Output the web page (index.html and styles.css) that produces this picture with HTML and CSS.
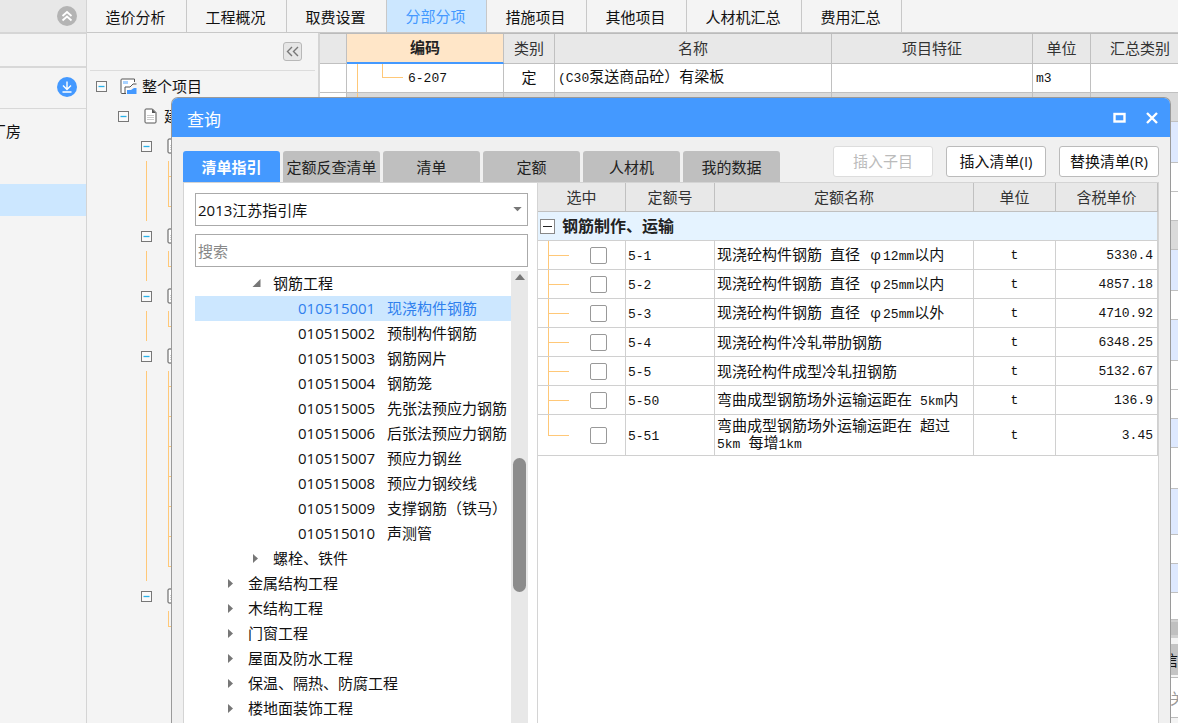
FILE: index.html
```html
<!DOCTYPE html>
<html lang="zh-CN">
<head>
<meta charset="utf-8">
<title>分部分项 - 查询</title>
<link rel="stylesheet" href="styles.css">
</head>
<body>
<svg class="defs" aria-hidden="true">
  <symbol id="minus" viewBox="0 0 11 11"><rect x=".5" y=".5" width="10" height="10" fill="#fafafa" stroke="#777"/><path d="M2.5 5.5h6" stroke="#29b1e8" stroke-width="1.300"/></symbol>
  <symbol id="doc" viewBox="0 0 13 16"><path d="M2 1h6.500l3.500 3.500V14a1 1 0 0 1-1 1H2a1 1 0 0 1-1-1V2a1 1 0 0 1 1-1z" fill="#fff" stroke="#555"/><path d="M8 1v4h4z" fill="#555"/><path d="M3 7.500h7M3 9.500h7M3 11.500h7" stroke="#ccc"/></symbol>
</svg>
<div class="app">
  <aside class="side">
    <div class="side-head">
      <svg class="round" viewBox="0 0 20 20"><circle cx="10" cy="10" r="10" fill="#b4b4b4"/><path d="M5.500 10L10 6l4.500 4M5.500 14.500L10 10.500l4.500 4" fill="none" stroke="#fff" stroke-width="1.800"/></svg>
    </div>
    <div class="side-gap"></div>
    <div class="side-load">
      <svg class="round" viewBox="0 0 20 20"><circle cx="10" cy="10" r="10" fill="#4499ff"/><path d="M10 4.500v8M6 8.500l4 4 4-4M5.500 15h9" fill="none" stroke="#fff" stroke-width="1.400"/></svg>
    </div>
    <div class="side-item">厂房</div>
    <div class="side-item side-selected"></div>
  </aside>

  <main class="main">
    <nav class="tabs">
      <button>造价分析</button><button>工程概况</button><button>取费设置</button><button class="on">分部分项</button><button>措施项目</button><button>其他项目</button><button class="wide">人材机汇总</button><button>费用汇总</button>
    </nav>
    <div class="work">
      <section class="project">
        <div class="project-bar">
          <button class="fold" aria-label="收起"><svg viewBox="0 0 17 17"><path d="M8 4L3.500 8.500 8 13M14 4L9.500 8.500 14 13" fill="none" stroke="#777" stroke-width="1.400"/></svg></button>
        </div>
        <ul class="tree">
          <li class="node l1"><svg class="pm"><use href="#minus"/></svg>
            <svg class="proj" viewBox="0 0 17 17"><path d="M6 15.500H2a1 1 0 0 1-1-1V2a1 1 0 0 1 1-1h12.500v3" fill="#fff" stroke="#555"/><path d="M3 3h5v3H3z" fill="#a8d2ff"/><path d="M5 16V9h5l3-3h3.500" fill="none" stroke="#555"/><path d="M7 16v-4h4l3-2h2.500v6z" fill="#4499ff"/></svg>
            整个项目</li>
          <li class="node l2"><svg class="pm"><use href="#minus"/></svg><svg class="doc"><use href="#doc"/></svg>建筑工程</li>
          <li class="node l3"><svg class="pm"><use href="#minus"/></svg><svg class="doc"><use href="#doc"/></svg></li>
          <li class="leaf"></li><li class="leaf end"></li>
          <li class="node l3"><svg class="pm"><use href="#minus"/></svg><svg class="doc"><use href="#doc"/></svg></li>
          <li class="leaf end"></li>
          <li class="node l3"><svg class="pm"><use href="#minus"/></svg><svg class="doc"><use href="#doc"/></svg></li>
          <li class="leaf end"></li>
          <li class="node l3"><svg class="pm"><use href="#minus"/></svg><svg class="doc"><use href="#doc"/></svg></li>
          <li class="leaf"></li><li class="leaf"></li><li class="leaf"></li><li class="leaf"></li><li class="leaf"></li><li class="leaf"></li><li class="leaf end"></li>
          <li class="node l3"><svg class="pm"><use href="#minus"/></svg><svg class="doc"><use href="#doc"/></svg></li>
          <li class="leaf end last"></li>
        </ul>
      </section>

      <section class="sheet">
        <table class="bill">
          <colgroup><col class="b0"><col class="b1"><col class="b2"><col class="b3"><col class="b4"><col class="b5"><col class="b6"></colgroup>
          <thead><tr><th></th><th class="active">编码</th><th>类别</th><th>名称</th><th>项目特征</th><th>单位</th><th>汇总类别</th></tr></thead>
          <tbody>
            <tr><td></td><td class="code"><span class="lat">6-207</span></td><td class="mid">定</td><td><span class="lat">(C30</span>泵送商品砼）有梁板</td><td></td><td><span class="lat">m3</span></td><td></td></tr>
            <tr class="grey"><td></td><td class="stem"></td><td></td><td></td><td></td><td></td><td></td></tr>
            <tr class="blue tall"><td colspan="7"></td></tr>
            <tr><td colspan="7"></td></tr>
            <tr><td colspan="7"></td></tr>
            <tr class="grey"><td colspan="7"></td></tr>
            <tr class="blue tall"><td colspan="7"></td></tr>
            <tr><td colspan="7"></td></tr>
            <tr class="blue tall"><td colspan="7"></td></tr>
            <tr><td colspan="7"></td></tr>
            <tr><td colspan="7"></td></tr>
            <tr class="blue"><td colspan="7"></td></tr>
            <tr class="tall"><td colspan="7"></td></tr>
            <tr class="blue taller"><td colspan="7"></td></tr>
            <tr><td colspan="7"></td></tr>
            <tr class="blue"><td colspan="7"></td></tr>
            <tr class="plain"><td colspan="7"></td></tr>
          </tbody>
        </table>
        <div class="hscroll"></div>
        <div class="lower-tabs"><span>信息</span></div>
        <div class="lower-row">关联</div>
        <div class="lower-end"></div>
      </section>
    </div>
  </main>
</div>

<div class="dialog" role="dialog" aria-labelledby="dlg-title">
  <header class="title">
    <h1 id="dlg-title">查询</h1>
    <button aria-label="最大化"><svg viewBox="0 0 14 12"><rect x="1.500" y="2" width="10" height="7.500" fill="none" stroke="#fff" stroke-width="2.400"/></svg></button>
    <button aria-label="关闭"><svg viewBox="0 0 14 12"><path d="M2 1l10 10M12 1L2 11" stroke="#fff" stroke-width="2.400"/></svg></button>
  </header>
  <div class="tools">
    <div class="dtabs">
      <button class="on">清单指引</button><button>定额反查清单</button><button>清单</button><button>定额</button><button>人材机</button><button>我的数据</button>
    </div>
    <div class="actions">
      <button disabled>插入子目</button><button>插入清单(I)</button><button>替换清单(R)</button>
    </div>
  </div>
  <div class="panes">
    <section class="guide">
      <div class="pick">
        <select aria-label="指引库"><option>2013江苏指引库</option></select>
        <svg viewBox="0 0 10 6"><path d="M0 0h10L5 5z" fill="#777"/></svg>
      </div>
      <input class="search" type="text" placeholder="搜索" aria-label="搜索">
      <div class="scroller">
        <ul class="items">
          <li class="g2"><svg class="tri" viewBox="0 0 9 9"><path d="M8.500 0v8H.5z" fill="#777"/></svg>钢筋工程</li>
          <li class="item chosen"><span>010515001</span>现浇构件钢筋</li>
          <li class="item"><span>010515002</span>预制构件钢筋</li>
          <li class="item"><span>010515003</span>钢筋网片</li>
          <li class="item"><span>010515004</span>钢筋笼</li>
          <li class="item"><span>010515005</span>先张法预应力钢筋</li>
          <li class="item"><span>010515006</span>后张法预应力钢筋</li>
          <li class="item"><span>010515007</span>预应力钢丝</li>
          <li class="item"><span>010515008</span>预应力钢绞线</li>
          <li class="item"><span>010515009</span>支撑钢筋（铁马）</li>
          <li class="item"><span>010515010</span>声测管</li>
          <li class="g2"><svg class="tri" viewBox="0 0 9 9"><path d="M1 0l5 4.500L1 9z" fill="#777"/></svg>螺栓、铁件</li>
          <li class="g1"><svg class="tri" viewBox="0 0 9 9"><path d="M1 0l5 4.500L1 9z" fill="#777"/></svg>金属结构工程</li>
          <li class="g1"><svg class="tri" viewBox="0 0 9 9"><path d="M1 0l5 4.500L1 9z" fill="#777"/></svg>木结构工程</li>
          <li class="g1"><svg class="tri" viewBox="0 0 9 9"><path d="M1 0l5 4.500L1 9z" fill="#777"/></svg>门窗工程</li>
          <li class="g1"><svg class="tri" viewBox="0 0 9 9"><path d="M1 0l5 4.500L1 9z" fill="#777"/></svg>屋面及防水工程</li>
          <li class="g1"><svg class="tri" viewBox="0 0 9 9"><path d="M1 0l5 4.500L1 9z" fill="#777"/></svg>保温、隔热、防腐工程</li>
          <li class="g1"><svg class="tri" viewBox="0 0 9 9"><path d="M1 0l5 4.500L1 9z" fill="#777"/></svg>楼地面装饰工程</li>
        </ul>
        <div class="bar"><svg viewBox="0 0 10 6"><path d="M0 6h10L5 0z" fill="#777"/></svg><div class="thumb"></div></div>
      </div>
    </section>
    <section class="result">
      <table class="quota">
        <colgroup><col class="q0"><col class="q1"><col class="q2"><col class="q3"><col class="q4"></colgroup>
        <thead><tr><th>选中</th><th>定额号</th><th>定额名称</th><th>单位</th><th>含税单价</th></tr></thead>
        <tbody>
          <tr class="group"><td colspan="5"><button aria-label="折叠"><svg viewBox="0 0 15 15"><rect x=".5" y=".5" width="14" height="14" fill="#fff" stroke="#888"/><path d="M3 7.500h9" stroke="#222"/></svg></button><b>钢筋制作、运输</b></td></tr>
          <tr><td class="tick"><input type="checkbox" aria-label="5-1"></td><td><span class="lat">5-1</span></td><td>现浇砼构件钢筋<i></i>直径<i></i><em>φ</em><span class="lat">12mm</span>以内</td><td class="mid lat">t</td><td class="num lat">5330.4</td></tr>
          <tr><td class="tick"><input type="checkbox" aria-label="5-2"></td><td><span class="lat">5-2</span></td><td>现浇砼构件钢筋<i></i>直径<i></i><em>φ</em><span class="lat">25mm</span>以内</td><td class="mid lat">t</td><td class="num lat">4857.18</td></tr>
          <tr><td class="tick"><input type="checkbox" aria-label="5-3"></td><td><span class="lat">5-3</span></td><td>现浇砼构件钢筋<i></i>直径<i></i><em>φ</em><span class="lat">25mm</span>以外</td><td class="mid lat">t</td><td class="num lat">4710.92</td></tr>
          <tr><td class="tick"><input type="checkbox" aria-label="5-4"></td><td><span class="lat">5-4</span></td><td>现浇砼构件冷轧带肋钢筋</td><td class="mid lat">t</td><td class="num lat">6348.25</td></tr>
          <tr><td class="tick"><input type="checkbox" aria-label="5-5"></td><td><span class="lat">5-5</span></td><td>现浇砼构件成型冷轧扭钢筋</td><td class="mid lat">t</td><td class="num lat">5132.67</td></tr>
          <tr><td class="tick"><input type="checkbox" aria-label="5-50"></td><td><span class="lat">5-50</span></td><td>弯曲成型钢筋场外运输运距在<i></i><span class="lat">5km</span>内</td><td class="mid lat">t</td><td class="num lat">136.9</td></tr>
          <tr class="double"><td class="tick"><input type="checkbox" aria-label="5-51"></td><td><span class="lat">5-51</span></td><td>弯曲成型钢筋场外运输运距在<i></i>超过<br><span class="lat">5km</span><i></i>每增<span class="lat">1km</span></td><td class="mid lat">t</td><td class="num lat">3.45</td></tr>
        </tbody>
      </table>
    </section>
  </div>
</div>
</body>
</html>
```

FILE: styles.css
```css
* { box-sizing: border-box; }
html, body { height: 100%; }
body {
  margin: 0;
  overflow: hidden;
  position: relative;
  background: #f4f4f4;
  color: #111;
  font: 15px/20px "Open Sans", "Noto Sans CJK SC", sans-serif;
}
button, input, select { font: inherit; color: inherit; margin: 0; padding: 0; border: 0; background: none; border-radius: 0; }
ul { list-style: none; margin: 0; padding: 0; }
svg { display: block; flex: none; }
.defs { position: absolute; width: 0; height: 0; }
.lat { font-family: "Liberation Mono", monospace; font-size: 13px; }

.app { display: flex; height: 100%; }

/* project sidebar */
.side { width: 87px; flex: none; border-right: 1px solid #d4d4d4; overflow: hidden; }
.side-head, .side-load { display: flex; justify-content: flex-end; align-items: center; padding-right: 9px; }
.side-head { height: 34px; background: #e8e8e8; border-bottom: 2px solid #d6d6d6; }
.side-gap { height: 34px; border-bottom: 2px solid #d8d8d8; }
.side-load { height: 41px; padding-bottom: 2px; border-bottom: 1px solid #d8d8d8; }
.round { width: 20px; height: 20px; }
.side-item { height: 44px; padding: 12px 0; margin-left: -9px; }
.side-selected { height: 32px; margin: 31px 0 0; background: #cce7ff; }

/* page tabs */
.main { flex: 1; min-width: 0; display: flex; flex-direction: column; }
.tabs { display: flex; height: 33px; flex: none; border-bottom: 1px solid #c8c8c8; }
.tabs button { width: 100px; padding: 1px 2px 0 0; border-right: 1px solid #c8c8c8; }
.tabs .wide { width: 115px; }
.tabs .on { padding-bottom: 2px; background: #cce7ff; color: #4499ff; }
.work { flex: 1; min-height: 0; display: flex; }

/* project tree */
.project { width: 233px; flex: none; border-right: 2px solid #d4d4d4; padding: 0 3px; }
.project-bar { height: 38px; display: flex; justify-content: flex-end; align-items: center; padding-right: 13px; border-bottom: 1px solid #dcdcdc; }
.fold { width: 19px; height: 19px; border: 1px solid #b8b8b8; border-radius: 3px; background: #e6e6e6; }
.node, .leaf { height: 30px; }
.node { display: flex; align-items: center; white-space: nowrap; }
.pm { width: 11px; height: 11px; }
.doc { width: 13px; height: 16px; margin: 0 7px 0 15px; }
.proj { width: 17px; height: 17px; margin: 0 5px 0 13px; }
.l1 { padding-left: 6px; }
.l2 { padding-left: 28px; }
.l3 { padding-left: 51px; }
.tree .leaf {
  margin-left: 56px;
  background:
    linear-gradient(#ffc878, #ffc878) 0 0 / 1px 100% no-repeat,
    linear-gradient(#ffc878, #ffc878) 22px 0 / 1px 100% no-repeat,
    linear-gradient(#ffc878, #ffc878) 22px 15px / 12px 1px no-repeat;
}
.tree .end { background-size: 1px 100%, 1px 16px, 12px 1px; }
.tree .last { background-size: 0 0, 1px 16px, 12px 1px; }

/* bill sheet */
.sheet { flex: 1; min-width: 0; overflow: hidden; }
.bill, .quota { table-layout: fixed; border-spacing: 0; }
.bill { width: 870px; border-top: 1px solid #bbb; background: #fff; }
.bill th, .bill td { border-right: 1px solid #c0c0c0; border-bottom: 1px solid #c0c0c0; padding: 0 3px 2px; height: 29px; }
.bill th { height: 30px; background: #e8e8e8; font-weight: 400; color: #333; }
.bill .active { background: #ffe6c8; border-bottom: 2px solid #4499ff; font-weight: 700; color: #222; }
.b0 { width: 27px; } .b1 { width: 157px; } .b2 { width: 51px; } .b3 { width: 277px; }
.b4 { width: 201px; } .b5 { width: 58px; } .b6 { width: 99px; }
.bill .code {
  padding-left: 61px;
  background:
    linear-gradient(#ffc878, #ffc878) 10px 0 / 1px 100% no-repeat,
    linear-gradient(#ffc878, #ffc878) 35px 0 / 1px 14px no-repeat,
    linear-gradient(#ffc878, #ffc878) 35px 13px / 21px 1px no-repeat;
}
.mid { text-align: center; }
.bill .grey td { background: #dadada; }
.bill .grey td:first-child:not([colspan]) { background: #fff; }
.bill .grey .stem { background: linear-gradient(#ffc878, #ffc878) 10px 0 / 1px 100% no-repeat #dadada; }
.bill .blue td { background: #dee9ff; }
.bill .tall td { height: 41px; }
.bill .taller td { height: 46px; }
.bill .plain td { height: 27px; }
.hscroll { height: 18px; border: solid #d0d0d0; border-width: 2px 0 3px; background: #c0c0c0; }
.lower-tabs { height: 40px; padding: 6px 0 2px; border-bottom: 1px solid #bbb; display: flex; justify-content: flex-end; }
.lower-tabs span { background: #c4c4c4; width: 27px; padding: 6px 0 0 12px; white-space: nowrap; overflow: hidden; }
.lower-row { height: 40px; border-bottom: 1px solid #bbb; background: #fff; color: #999; display: flex; align-items: center; margin-left: auto; width: 8px; white-space: nowrap; }
.lower-end { height: 10px; background: #f4f4f4; }

/* query dialog */
.dialog {
  position: absolute;
  inset: 97px 7px 0 171px;
  display: flex;
  flex-direction: column;
  border: 1px solid #9a9a9a;
  border-bottom: 0;
  border-radius: 7px 7px 0 0;
  background: #f0f0f0;
  overflow: hidden;
}
.title { height: 39px; flex: none; display: flex; align-items: center; gap: 18px; padding: 0 11px 0 15px; background: #4499ff; }
.title h1 { flex: 1; margin: 0; padding-top: 4px; font-size: 17px; font-weight: 400; color: #fff; }
.title svg { width: 14px; height: 12px; }
.tools { display: flex; justify-content: space-between; padding: 9px 11px 0; }
.dtabs { display: flex; gap: 3px; padding-top: 5px; }
.dtabs button { width: 97px; height: 31px; border-radius: 3px 3px 0 0; background: #bfbfbf; color: #222; white-space: nowrap; }
.dtabs .on { background: #4499ff; color: #fff; font-weight: 700; }
.actions { display: flex; gap: 13px; }
.actions button { width: 100px; height: 31px; padding-bottom: 2px; border: 1px solid #bbb; border-radius: 3px; background: #fff; }
.actions button:disabled { border-color: #ddd; color: #bbb; }
.panes { flex: 1; min-height: 0; display: flex; margin: 0 11px; border: solid #d4d4d4; border-width: 1px 1px 0; background: #fff; }
.guide { width: 354px; flex: none; padding: 10px 9px 0 11px; display: flex; flex-direction: column; border-right: 1px solid #d4d4d4; }
.pick { display: grid; align-items: center; flex: none; }
.pick select, .pick svg { grid-area: 1 / 1; }
.pick select { appearance: none; height: 33px; padding: 0 2px; border: 1px solid #aaa; background: #fff; }
.pick svg { justify-self: end; width: 9px; height: 5px; margin-right: 6px; pointer-events: none; }
.search { height: 33px; margin: 8px 0 4px; padding: 0 2px; border: 1px solid #aaa; background: #fff; flex: none; }
.search::placeholder { color: #888; opacity: 1; }
.scroller { flex: 1; min-height: 0; display: flex; overflow: hidden; }
.items { flex: 1; min-width: 0; }
.items li { height: 25px; padding-bottom: 1px; display: flex; align-items: center; white-space: nowrap; }
.items .g1 { padding-left: 32px; }
.items .g2 { padding-left: 57px; }
.tri { width: 9px; height: 9px; margin-right: 12px; }
.items .item { padding-left: 103px; }
.item span { width: 89px; }
.items .chosen { background: #cce7ff; color: #2f80ee; }
.bar { width: 17px; background: #e8e8e8; padding: 3px 2px 0; }
.bar svg { width: 10px; height: 6px; margin: 0 auto; }
.thumb { height: 134px; margin-top: 178px; border-radius: 7px; background: #8c8c8c; }

/* quota table */
.result { flex: 1; min-width: 0; }
.quota { width: 100%; color: #111; }
.quota th, .quota td { height: 29px; padding: 0 2px; border-right: 1px solid #d0d0d0; border-bottom: 1px solid #d0d0d0; line-height: 17px; }
.quota th { background: #e8e8e8; border-color: #c0c0c0; font-weight: 400; color: #333; }
.q0 { width: 88px; } .q1 { width: 89px; } .q3 { width: 82px; } .q4 { width: 102px; }
.quota .group td { background: #e5f3ff; }
.group button { display: inline-block; vertical-align: middle; margin-right: 7px; }
.group svg { width: 15px; height: 15px; }
.group b { vertical-align: middle; font-size: 16px; color: #222; }
.quota i { display: inline-block; width: 8px; }
.quota em { display: inline-block; width: 15px; text-align: center; font-style: normal; }
.quota .num { text-align: right; padding-right: 4px; }
.quota .tick {
  padding: 0 0 0 52px;
  background:
    linear-gradient(#ffc878, #ffc878) 10px 0 / 1px 100% no-repeat,
    linear-gradient(#ffc878, #ffc878) 10px 14px / 21px 1px no-repeat;
}
.quota .double td { height: 41px; }
.quota .double .tick { background-position: 10px 0, 10px 20px; background-size: 1px 20px, 21px 1px; }
.tick input { display: block; appearance: none; width: 17px; height: 17px; border: 1px solid #999; border-radius: 2px; background: #fff; }
```
